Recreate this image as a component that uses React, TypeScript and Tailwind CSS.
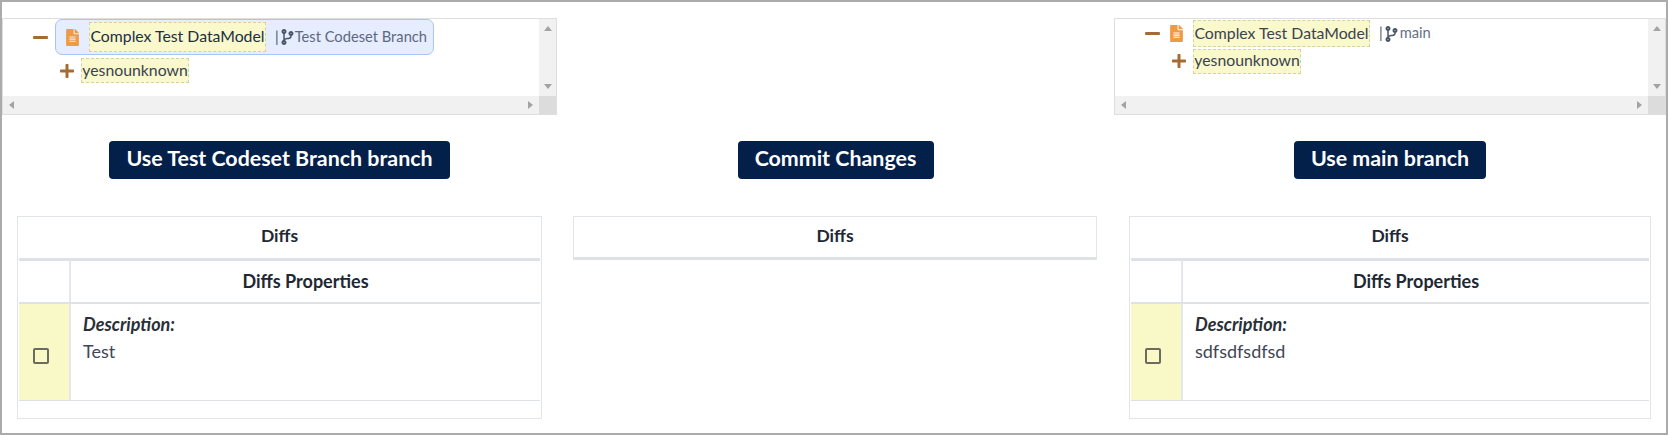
import React from "react";
import { FaCodeBranch, FaFileAlt, FaMinus, FaPlus } from "react-icons/fa";

const Tri = ({ d }: { d: "u" | "d" | "l" | "r" }) => {
  const pts = { u: "0,5 4,0 8,5", d: "0,0 8,0 4,5", l: "5,0 5,8 0,4", r: "0,0 0,8 5,4" }[d];
  const horiz = d === "l" || d === "r";
  return (
    <svg width={horiz ? 5 : 8} height={horiz ? 8 : 5} viewBox={horiz ? "0 0 5 8" : "0 0 8 5"}>
      <polygon points={pts} fill="#a3a3a3" />
    </svg>
  );
};

const Label = ({ children, className }: { children: React.ReactNode; className: string }) => (
  <span className={`flex items-center whitespace-nowrap border border-dashed border-[#d2d2a8] bg-[#f9f9cb] pb-[2px] text-[15.8px] ${className}`}>
    {children}
  </span>
);

const Tree = ({ right }: { right?: boolean }) => (
  <div className="flex h-[97px] flex-col border border-[#dedede] bg-white">
    <div className="flex min-h-0 flex-1">
      <div className="min-w-0 flex-1">
        {right ? (
          <>
            <div className="flex h-[29px] items-center pl-[29px] text-[#3b4252]">
              <FaMinus className="h-[17px] w-[17px] text-[#a66a33]" />
              <FaFileAlt className="ml-[9px] h-[17px] w-[13px] text-[#ee9b45]" />
              <Label className="ml-[10px] h-[27px] w-[177px] justify-center">Complex Test DataModel</Label>
              <span className="ml-[9px] pb-[2px] text-[14.7px] text-[#4a5568]">|</span>
              <FaCodeBranch className="ml-[2px] h-[16px] w-[13px] text-[#4a5568]" />
              <span className="ml-[2px] pb-[2px] text-[14.7px] text-[#66708a]">main</span>
            </div>
            <div className="flex h-[26px] items-center pl-[56px] text-[#3b4252]">
              <FaPlus className="h-[16px] w-[16px] text-[#a66a33]" />
              <Label className="ml-[6px] h-[25px] w-[108px] justify-center">yesnounknown</Label>
            </div>
          </>
        ) : (
          <>
            <div className="flex h-[36px] items-center pl-[29px]">
              <FaMinus className="h-[17px] w-[17px] text-[#a66a33]" />
              <div className="ml-[6px] flex h-[36px] w-[379px] items-center rounded-[7px] border border-[#a9c4f7] bg-[#e5edff] pl-[10px]">
                <FaFileAlt className="h-[17px] w-[13px] text-[#ee9b45]" />
                <Label className="ml-[10px] h-[30px] w-[177px] justify-center text-[#222e45]">Complex Test DataModel</Label>
                <span className="ml-[9px] pb-[2px] text-[14.7px] text-[#4a5568]">|</span>
                <FaCodeBranch className="ml-[2px] h-[16px] w-[13px] text-[#4a5568]" />
                <span className="ml-[1px] whitespace-nowrap pb-[2px] text-[14.7px] text-[#5f6880]">Test Codeset Branch</span>
              </div>
            </div>
            <div className="mt-[3px] flex h-[25px] items-center pl-[56px] text-[#3b4252]">
              <FaPlus className="h-[16px] w-[16px] text-[#a66a33]" />
              <Label className="ml-[6px] h-[25px] w-[108px] justify-center">yesnounknown</Label>
            </div>
          </>
        )}
      </div>
      <div className="flex w-[17px] flex-col items-center justify-between bg-[#f1f1f1] py-[7px]">
        <Tri d="u" />
        <Tri d="d" />
      </div>
    </div>
    <div className="flex h-[18px] bg-[#f1f1f1]">
      <div className="flex flex-1 items-center justify-between px-[6px]">
        <Tri d="l" />
        <Tri d="r" />
      </div>
      <div className="w-[17px] bg-[#dcdcdc]" />
    </div>
  </div>
);

const Action = ({ children, w }: { children: React.ReactNode; w: string }) => (
  <div className="mt-[26px] flex justify-center">
    <button className={`h-[38px] rounded-[4px] bg-[#03204a] pb-[3px] text-[21.4px] font-bold text-white ${w}`}>
      {children}
    </button>
  </div>
);

const DiffsHead = () => (
  <div className="flex h-[41px] items-center justify-center pb-[2px] text-[17.5px] font-bold text-[#212833]">Diffs</div>
);

const Diffs = ({ value }: { value: string }) => (
  <div className="mx-[15px] mt-[37px] h-[203px] border border-[#e1e5ea]">
    <DiffsHead />
    <div className="mx-[1px] border-t-[3px] border-[#dee2e6]">
      <div className="flex h-[43px] border-b-2 border-[#dee2e6]">
        <div className="w-[52px] border-r-2 border-[#e4e8ee]" />
        <div className="flex flex-1 items-center justify-center pb-[1px] text-[18px] font-bold text-[#212833]">Diffs Properties</div>
      </div>
      <div className="flex h-[97px] border-b border-[#dee2e6]">
        <div className="flex w-[52px] items-center justify-center border-r-2 border-[#e4e8ee] bg-[#f9f9c8] pr-[6px] pt-[7px]">
          <div className="h-[16px] w-[16px] rounded-[2px] border-2 border-[#6b6b5e]" />
        </div>
        <div className="flex-1 pl-[12px] pt-[7px] text-[18px] leading-[27px]">
          <div className="font-bold italic text-[#2a2f38]">Description:</div>
          <div className="text-[#3f4656]">{value}</div>
        </div>
      </div>
    </div>
  </div>
);

export default function App() {
  return (
    <div
      className="box-border h-[435px] w-[1668px] overflow-hidden border-2 border-[#ababab] bg-white pt-[16px]"
      style={{ fontFamily: 'Lato, "Noto Sans", sans-serif' }}
    >
      <div className="grid grid-cols-[555px_557px_1fr]">
        <div>
          <Tree />
          <Action w="w-[341px]">Use Test Codeset Branch branch</Action>
          <Diffs value="Test" />
        </div>
        <div>
          <div className="h-[97px]" />
          <Action w="w-[196px]">Commit Changes</Action>
          <div className="ml-[16px] mr-[17px] mt-[37px] h-[44px] border border-b-[3px] border-[#e1e5ea] border-b-[#dee2e6]">
            <DiffsHead />
          </div>
        </div>
        <div>
          <Tree right />
          <Action w="w-[192px]">Use main branch</Action>
          <Diffs value="sdfsdfsdfsd" />
        </div>
      </div>
    </div>
  );
}
